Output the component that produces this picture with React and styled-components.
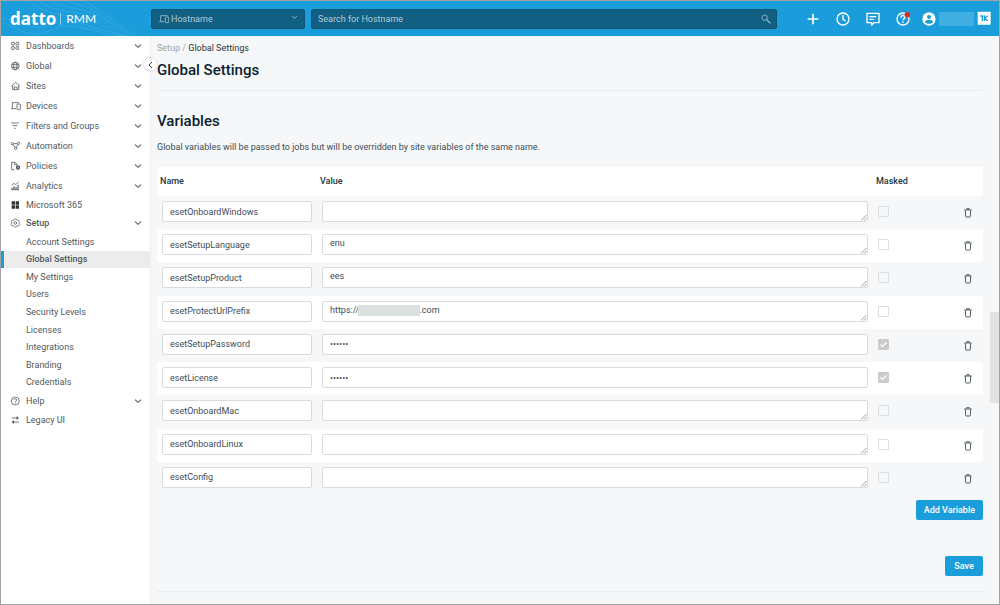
import React from "react";
import styled, { createGlobalStyle } from "styled-components";

const Global = createGlobalStyle`
  *, *::before, *::after { box-sizing: border-box; }
  body { margin: 0; background: #f6f7f9; }
  body, button, input, select, textarea {
    font-family: Roboto, "Liberation Sans", sans-serif;
    font-size: 9px;
  }
`;

const Frame = styled.div`
  min-height: 100vh;
  display: flex;
  flex-direction: column;
  border: 1px solid #a3a3a3;
  color: #3d4e56;
`;

const TopBar = styled.header`
  position: relative;
  display: flex;
  align-items: center;
  height: 35px;
  background: #1b9ddb;
`;

const Waves = styled.svg`
  position: absolute;
  left: 0;
  top: 0;
`;

const Brand = styled.a`
  position: relative;
  display: flex;
  align-items: center;
  flex: none;
  width: 150px;
  padding-left: 9px;
  color: #fff;
  text-decoration: none;
`;

const BrandName = styled.span`
  font: 700 17px/24px "Open Sans", sans-serif;
`;

const BrandProduct = styled.span`
  margin-left: 4px;
  padding-left: 5px;
  border-left: 1px solid #8fcfee;
  font: 400 12px/12px Lato, sans-serif;
`;

const PickerBox = styled.div`
  position: relative;
  width: 154px;
  flex: none;
  display: flex;
  color: #a9c3d0;
  > svg:first-child { position: absolute; left: 8px; top: 5px; pointer-events: none; }
  > svg:last-child { position: absolute; right: 7px; top: 5px; pointer-events: none; }
`;

const Picker = styled.select`
  appearance: none;
  width: 100%;
  height: 20px;
  padding: 0 20px 0 19px;
  border: 1px solid #0d5475;
  border-radius: 2px;
  background: #115f83;
  color: #b4cad5;
`;

const SearchBox = styled.div`
  position: relative;
  flex: 1;
  display: flex;
  margin-left: 6px;
  > svg { position: absolute; right: 6px; top: 5px; }
`;

const Search = styled.input`
  width: 100%;
  height: 20px;
  padding: 0 24px 0 6px;
  border: 1px solid #0d5475;
  border-radius: 2px;
  background: #115f83;
  color: #fff;
  &::placeholder { color: #b4cad5; opacity: 1; }
`;

const Tools = styled.div`
  display: flex;
  align-items: center;
  gap: 14px;
  margin-left: 28px;
`;

const IconButton = styled.button`
  display: flex;
  align-items: center;
  justify-content: center;
  width: ${(p) => p.$size || 16}px;
  height: ${(p) => p.$size || 16}px;
  padding: 0;
  border: 0;
  background: none;
  color: ${(p) => p.$color || "#fff"};
`;

const Account = styled.div`
  display: flex;
  align-items: center;
  margin: 0 7px 0 10px;
  gap: 2px;
`;

const UserName = styled.span`
  width: 35px;
  height: 14px;
  background: #41aee1;
`;

const Body = styled.div`
  display: flex;
  flex: 1;
`;

const Sidebar = styled.nav`
  position: relative;
  flex: none;
  width: 150px;
  background: #fff;
  border-right: 1px solid #eceef1;
`;

const NavItem = styled.a`
  display: flex;
  align-items: center;
  height: ${(p) => p.$height}px;
  padding: 0 8px 0 9px;
  color: #505a60;
  font-weight: ${(p) => (p.$open ? 500 : 400)};
  text-decoration: none;
  > span { flex: 1; margin-left: 4px; }
`;

const SubMenu = styled.div`
  display: grid;
  grid-auto-rows: 1fr;
  height: 158px;
  margin-top: 1px;
`;

const SubItem = styled.a`
  display: flex;
  align-items: center;
  padding-left: 22px;
  border-left: 3px solid ${(p) => (p.$active ? "#1b9ddb" : "transparent")};
  background: ${(p) => (p.$active ? "#ececec" : "transparent")};
  color: #505a60;
  font-weight: ${(p) => (p.$active ? 500 : 400)};
  text-decoration: none;
`;

const Collapse = styled.button`
  position: absolute;
  right: -8px;
  top: 21px;
  display: flex;
  align-items: center;
  justify-content: center;
  width: 15px;
  height: 15px;
  padding: 0;
  border: 1px solid #e2e5e8;
  border-radius: 50%;
  background: #fff;
  color: #33444d;
`;

const Main = styled.main`
  flex: 1;
  min-width: 0;
  padding: 6px 7px 0 6px;
`;

const Crumbs = styled.div`
  line-height: 12px;
  color: #1f3540;
  a { color: #9aa5ab; text-decoration: none; }
`;

const Title = styled.h1`
  margin: 0;
  padding: 6px 0 10px;
  border-bottom: 1px solid #e9ebed;
  font-size: 15px;
  font-weight: 500;
  line-height: 20px;
  color: #0c2230;
`;

const Heading = styled.h2`
  margin: 20px 0 10px;
  font-size: 15px;
  font-weight: 500;
  line-height: 20px;
  color: #0c2230;
`;

const Intro = styled.p`
  margin: 0 0 14px;
  line-height: 12px;
`;

const Table = styled.table`
  width: 100%;
  height: 328px;
  border-collapse: collapse;
  table-layout: fixed;
  col.name { width: 160px; }
  col.masked { width: 77px; }
  col.action { width: 33px; }
  thead tr { height: 29px; background: #fff; }
  tbody tr:nth-child(even) { background: #fff; }
  th { padding: 0 3px 2px; text-align: left; font-weight: 500; color: #24363f; }
  td { padding: 5px 5px 0; vertical-align: top; }
  td:last-child { padding: 10px 8px 0 11px; }
`;

const Field = styled.input`
  display: block;
  width: 100%;
  height: 21px;
  padding: 0 7px;
  border: 1px solid #d9dcde;
  border-radius: 2px;
  background: #fff;
  color: #3d4e56;
`;

const Area = styled.textarea`
  display: block;
  width: 100%;
  height: 21px;
  padding: 3px 7px;
  border: 1px solid #d9dcde;
  border-radius: 2px;
  background: #fff;
  color: #3d4e56;
  line-height: 11px;
  overflow: hidden;
  resize: vertical;
  &::-webkit-resizer {
    background: url("data:image/svg+xml,%3Csvg xmlns='http://www.w3.org/2000/svg' width='6' height='6' viewBox='0 0 6 6'%3E%3Cpath d='M0 5.500L5.500 0M3 5.500L5.500 3' stroke='%23848484' stroke-width='.8'/%3E%3C/svg%3E") no-repeat right bottom;
  }
`;

const ValueBox = styled.div`
  position: relative;
`;

const Redacted = styled.span`
  position: absolute;
  left: 36px;
  top: 4px;
  width: 62px;
  height: 11px;
  background: #dbe1e1;
`;

const Tick = styled.input`
  appearance: none;
  display: block;
  width: 11px;
  height: 11px;
  margin: 5px 0 0;
  border: 1px solid #dcdfe1;
  border-radius: 1px;
  &:checked {
    border-color: #cbcbcb;
    background: #cbcbcb url("data:image/svg+xml,%3Csvg xmlns='http://www.w3.org/2000/svg' viewBox='0 0 9 9'%3E%3Cpath d='M1.5 4.5l2 2 4-4' fill='none' stroke='white' stroke-width='1.2'/%3E%3C/svg%3E");
  }
`;

const Actions = styled.div`
  display: flex;
  justify-content: flex-end;
  padding: ${(p) => p.$top}px 0 ${(p) => p.$bottom}px;
`;

const Button = styled.button`
  min-width: 38px;
  height: 20px;
  padding: 0 8px;
  border: 0;
  border-radius: 2px;
  background: #1b9ddb;
  color: #fff;
  font-weight: 500;
`;

const Rule = styled.hr`
  margin: 0;
  border: 0;
  border-top: 1px solid #e9ebed;
`;

const ScrollTrack = styled.div`
  flex: none;
  display: grid;
  grid-template-rows: 276fr 91fr 201fr;
  width: 9px;
`;

const ScrollThumb = styled.div`
  grid-row: 2;
  background: #e2e2e2;
`;

const Svg = ({ w = 10, h = 10, box = "0 0 30 30", sw = 2.4, children }) => (
  <svg width={w} height={h} viewBox={box} fill="none" stroke="currentColor" strokeWidth={sw} aria-hidden="true">
    {children}
  </svg>
);

const Chevron = () => (
  <Svg w={8} h={8} box="0 0 24 24" sw={3.2}><path d="M3 8l9 8 9-8" /></Svg>
);

const devicesShape = (
  <>
    <path d="M5 21V5h20M1 23h15" />
    <rect x="19" y="9" width="10" height="17" rx="1.500" />
  </>
);

const icons = {
  Dashboards: (
    <>
      <rect x="3" y="4" width="8" height="8" rx="1" />
      <rect x="16" y="4" width="8" height="8" rx="1" />
      <rect x="3" y="17" width="8" height="8" rx="1" />
      <rect x="16" y="17" width="8" height="8" rx="1" />
    </>
  ),
  Global: (
    <>
      <circle cx="14" cy="15" r="11.500" />
      <ellipse cx="14" cy="15" rx="5" ry="11" />
      <path d="M3 11h22M3 19h22" />
    </>
  ),
  Sites: (
    <>
      <path d="M2 16L15 4l13 12M6 13v13h18V13" />
      <path d="M11 25v-7h8v7" />
    </>
  ),
  Devices: devicesShape,
  "Filters and Groups": <path d="M1 6h23M5 14h15M10 22h5" />,
  Automation: (
    <>
      <circle cx="5" cy="8" r="3.500" />
      <circle cx="24" cy="7" r="3.500" />
      <circle cx="15" cy="22" r="3.500" />
      <path d="M8 8h12M7 11l6 8M22 10l-5 9" />
    </>
  ),
  Policies: (
    <>
      <path d="M12 26H3V4h10l6 6v4M12 4v7h7" />
      <path d="M16 15l6-2 6 2v5c0 4-3 6-6 7-3-1-6-3-6-7z" fill="currentColor" stroke="none" />
      <path d="M20 19l3-2v6" stroke="#fff" strokeWidth="1.500" />
    </>
  ),
  Analytics: (
    <>
      <path d="M3 13l7-6 5 4 9-8" />
      <path d="M4 26v-6M10 26v-10M16 26v-8M22 26V12" strokeWidth="3.500" />
      <path d="M2 26h23" />
    </>
  ),
  "Microsoft 365": (
    <path d="M3 4h10v10H3zM15 4h10v10H15zM3 16h10v10H3zM15 16h10v10H15z" fill="#333" stroke="none" />
  ),
  Setup: (
    <>
      <path d="M11 3h6l2 4 5 0 3 5-3 3 3 4-3 5-5-1-2 4h-6l-2-4-5 1-3-5 3-4-3-3 3-5 5 0z" strokeWidth="2" />
      <circle cx="14" cy="15" r="4" />
    </>
  ),
  Help: (
    <>
      <circle cx="14" cy="15" r="12" />
      <path d="M10 12c0-5 8-5 8 0 0 3-4 3-4 6M14 20v3" />
    </>
  ),
  "Legacy UI": (
    <>
      <path d="M3 9h16M9 21h16" />
      <path d="M18 3l7 6-7 6zM10 15l-7 6 7 6z" fill="currentColor" stroke="none" />
    </>
  ),
};

const NavLink = ({ label, height = 20, open, plain }) => (
  <NavItem href="#" $height={height} $open={open}>
    <Svg w={12} h={10} box="0 0 32 30">{icons[label]}</Svg>
    <span>{label}</span>
    {!plain && <Chevron />}
  </NavItem>
);

const mainLinks = ["Dashboards", "Global", "Sites", "Devices", "Filters and Groups", "Automation", "Policies", "Analytics"];
const setupLinks = ["Account Settings", "Global Settings", "My Settings", "Users", "Security Levels", "Licenses", "Integrations", "Branding", "Credentials"];

const variables = [
  { name: "esetOnboardWindows", value: "" },
  { name: "esetSetupLanguage", value: "enu" },
  { name: "esetSetupProduct", value: "ees" },
  { name: "esetProtectUrlPrefix", value: "https://" + "\u00a0".repeat(27) + ".com", redacted: true },
  { name: "esetSetupPassword", value: "secret", masked: true },
  { name: "esetLicense", value: "secret", masked: true },
  { name: "esetOnboardMac", value: "" },
  { name: "esetOnboardLinux", value: "" },
  { name: "esetConfig", value: "" },
];

const VariableRow = ({ item }) => (
  <tr>
    <td><Field aria-label="Name" defaultValue={item.name} /></td>
    <td>
      <ValueBox>
        {item.masked
          ? <Field type="password" aria-label={`${item.name} value`} defaultValue={item.value} />
          : <Area rows={1} aria-label={`${item.name} value`} defaultValue={item.value} />}
        {item.redacted && <Redacted />}
      </ValueBox>
    </td>
    <td><Tick type="checkbox" aria-label={`Mask ${item.name}`} defaultChecked={item.masked} disabled={item.masked} /></td>
    <td>
      <IconButton $size={14} $color="#4d5c63" aria-label={`Delete ${item.name}`}>
        <Svg w={8} h={10} box="0 0 24 30" sw={3}><path d="M1 6h22M8 5V2h8v3M4 7l1 18q0 2 2 2h10q2 0 2-2l1-18" /></Svg>
      </IconButton>
    </td>
  </tr>
);

export default function App() {
  return (
    <>
      <Global />
      <Frame>
        <TopBar>
          <Waves width="150" height="35" viewBox="0 0 150 35" fill="none" stroke="#45b0e3" strokeOpacity=".5" aria-hidden="true">
            <path d="M0 22c16 2 20 12 36 11s20-12 42-7 30 8 44 9M0 17c20 1 26 12 40 9s24-9 42-3 26 8 44 12M28 0c10 10 28 14 44 15s30 8 44 20M38 0c10 8 24 10 38 12s34 12 46 23M50 0c8 5 20 6 32 9s32 14 44 26M64 0c10 3 20 3 30 10s24 14 36 25M82 0c14 5 30 20 52 35" />
          </Waves>
          <Brand href="#"><BrandName>datto</BrandName><BrandProduct>RMM</BrandProduct></Brand>
          <PickerBox>
            <Svg>{devicesShape}</Svg>
            <Picker aria-label="Search by" defaultValue="Hostname"><option>Hostname</option></Picker>
            <Svg w={7} h={7} box="0 0 24 24" sw={2.8}><path d="M4 7l8 8 8-8" /></Svg>
          </PickerBox>
          <SearchBox>
            <Search aria-label="Search" placeholder="Search for Hostname" />
            <Svg><g stroke="#a9c3d0"><circle cx="11" cy="11" r="8" /><path d="M17 17l11 11" strokeWidth="3.500" /></g></Svg>
          </SearchBox>
          <Tools>
            <IconButton aria-label="Add"><Svg w={16} h={16} box="0 0 48 48" sw={5}><path d="M24 8v32M8 24h32" /></Svg></IconButton>
            <IconButton aria-label="Recent"><Svg w={16} h={16} box="0 0 48 48" sw={4}><circle cx="24" cy="24" r="18" /><path d="M24 12v13l8 5" /></Svg></IconButton>
            <IconButton aria-label="Messages"><Svg w={16} h={16} box="0 0 48 48" sw={4}><path d="M6 7h36v28H27l-7 7v-7H6z" strokeLinejoin="round" /><path d="M13 17h21M13 25h14" strokeWidth="3.500" /></Svg></IconButton>
            <IconButton aria-label="Help">
              <Svg w={16} h={16} box="0 0 48 48" sw={4}>
                <circle cx="24" cy="24" r="18" />
                <path d="M18 20c0-9 12-8 12-1 0 4-6 4-6 9M24 31v4" />
                <circle cx="37" cy="11" r="8" fill="#e2281f" stroke="none" />
              </Svg>
            </IconButton>
          </Tools>
          <Account>
            <IconButton aria-label="Account">
              <Svg w={16} h={16} box="0 0 48 48"><circle cx="24" cy="24" r="20" fill="#fff" stroke="none" /><g fill="#1b9ddb" stroke="none"><circle cx="24" cy="18" r="6" /><path d="M12 34c0-10 24-10 24 0-6 6-18 6-24 0z" /></g></Svg>
            </IconButton>
            <UserName />
            <IconButton aria-label="Switch product">
              <Svg w={16} h={16} box="0 0 48 48" sw={5}><rect x="5" y="2" width="39" height="39" rx="2" fill="#fff" stroke="none" /><g stroke="#1b9ddb" strokeWidth="4"><path d="M13 15h6v15M25 13v17M35 14l-9 8 9 8" /></g></Svg>
            </IconButton>
          </Account>
        </TopBar>
        <Body>
          <Sidebar>
            {mainLinks.map((l) => <NavLink key={l} label={l} />)}
            <NavLink label="Microsoft 365" height={18} plain />
            <NavLink label="Setup" height={18} open />
            <SubMenu>
              {setupLinks.map((l) => <SubItem key={l} href="#" $active={l === "Global Settings"}>{l}</SubItem>)}
            </SubMenu>
            <NavLink label="Help" />
            <NavLink label="Legacy UI" height={18} plain />
            <Collapse aria-label="Collapse menu"><Svg w={8} h={8} box="0 0 24 24" sw={3}><path d="M15 3l-9 9 9 9" /></Svg></Collapse>
          </Sidebar>
          <Main>
            <Crumbs><a href="#">Setup /</a> Global Settings</Crumbs>
            <Title>Global Settings</Title>
            <Heading>Variables</Heading>
            <Intro>Global variables will be passed to jobs but will be overridden by site variables of the same name.</Intro>
            <Table>
              <colgroup><col className="name" /><col /><col className="masked" /><col className="action" /></colgroup>
              <thead><tr><th>Name</th><th>Value</th><th>Masked</th><th aria-label="Actions" /></tr></thead>
              <tbody>{variables.map((v) => <VariableRow key={v.name} item={v} />)}</tbody>
            </Table>
            <Actions $top={5} $bottom={36}><Button>Add Variable</Button></Actions>
            <Actions $top={0} $bottom={15}><Button>Save</Button></Actions>
            <Rule />
          </Main>
          <ScrollTrack><ScrollThumb /></ScrollTrack>
        </Body>
      </Frame>
    </>
  );
}
